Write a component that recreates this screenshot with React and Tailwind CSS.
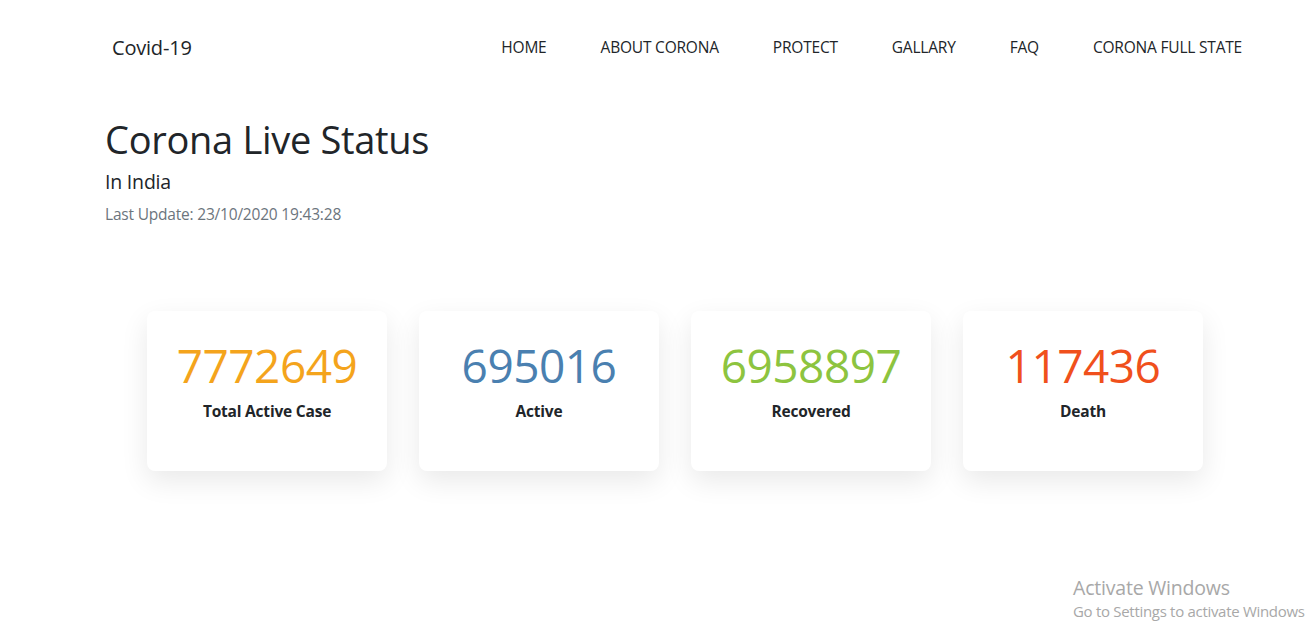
import React from "react";

const links = ["HOME", "ABOUT CORONA", "PROTECT", "GALLARY", "FAQ", "CORONA FULL STATE"];

const stats = [
  { value: "7772649", label: "Total Active Case", color: "text-[#f4a41c]" },
  { value: "695016", label: "Active", color: "text-[#4a80b0]" },
  { value: "6958897", label: "Recovered", color: "text-[#8dc43f]" },
  { value: "117436", label: "Death", color: "text-[#f0501c]" },
];

export default function App() {
  return (
    <div className="relative min-h-[644px] bg-white text-[#212529] font-['Open_Sans',sans-serif] overflow-hidden">
      {/* navbar */}
      <nav className="flex items-center justify-between pl-[112px] pr-[63px] h-[95px]">
        <div className="text-[20px] tracking-[-0.2px]">Covid-19</div>
        <ul className="flex items-center gap-[54px] text-[15.5px] tracking-[-0.2px]">
          {links.map((l) => (
            <li key={l}>{l}</li>
          ))}
        </ul>
      </nav>

      {/* heading */}
      <div className="pl-[105px] pt-[20px]">
        <h1 className="text-[38px] leading-[48px] tracking-[-0.3px]">Corona Live Status</h1>
        <p className="text-[19.5px] mt-[4px] tracking-[-0.2px]">In India</p>
        <p className="text-[15.5px] mt-[7px] text-[#6c757d] tracking-[-0.2px]">
          Last Update: 23/10/2020 19:43:28
        </p>
      </div>

      {/* cards */}
      <div className="flex gap-[32px] pl-[147px] mt-[84px]">
        {stats.map((s) => (
          <div
            key={s.label}
            className="w-[240px] h-[160px] bg-white rounded-lg shadow-[0_10px_28px_rgba(0,0,0,0.09)] flex flex-col items-center pt-[29px]"
          >
            <div className={`text-[46px] leading-[50px] tracking-[-0.5px] ${s.color}`}>{s.value}</div>
            <div className="text-[15.5px] font-bold mt-[10px] tracking-[-0.2px]">{s.label}</div>
          </div>
        ))}
      </div>

      {/* watermark */}
      <div className="absolute left-[1073px] top-[575px] text-[#a8a8a8]">
        <div className="text-[19.5px] leading-[26px] tracking-[-0.2px] whitespace-nowrap">Activate Windows</div>
        <div className="text-[15px] leading-[20px] tracking-[-0.3px] whitespace-nowrap">Go to Settings to activate Windows</div>
      </div>
    </div>
  );
}
